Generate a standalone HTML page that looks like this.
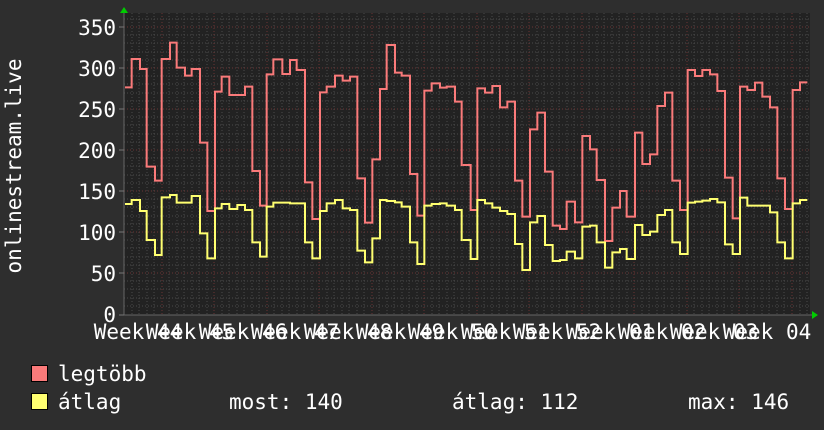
<!DOCTYPE html>
<html><head><meta charset="utf-8"><style>
html,body{margin:0;padding:0;background:#2e2e2e;}
svg{display:block}
text{font-family:"DejaVu Sans Mono","Liberation Mono",monospace;fill:#fff;font-size:21px}
</style></head><body>
<svg width="824" height="430" viewBox="0 0 824 430" xmlns="http://www.w3.org/2000/svg">
<rect width="824" height="430" fill="#2e2e2e"/>
<rect x="124" y="13" width="686" height="302" fill="#222"/>
<g id="grid" stroke-width="1" stroke-dasharray="1,2" fill="none">
<g stroke="#4a4a4a">
<script>/* none */</script>
</g>
</g>
<g stroke="#4a4a4a" stroke-width="1" stroke-dasharray="1,2">
<path d="M124 306h686M124 298h686M124 289h686M124 281h686M124 265h686M124 257h686M124 248h686M124 240h686M124 224h686M124 216h686M124 207h686M124 199h686M124 183h686M124 175h686M124 166h686M124 158h686M124 142h686M124 134h686M124 125h686M124 117h686M124 101h686M124 93h686M124 84h686M124 76h686M124 60h686M124 52h686M124 43h686M124 35h686M124 19h686"/>
<path d="M132 13v302M139 13v302M147 13v302M154 13v302M169 13v302M177 13v302M184 13v302M192 13v302M199 13v302M207 13v302M222 13v302M229 13v302M237 13v302M244 13v302M252 13v302M259 13v302M274 13v302M282 13v302M289 13v302M297 13v302M304 13v302M312 13v302M327 13v302M334 13v302M342 13v302M349 13v302M357 13v302M364 13v302M379 13v302M387 13v302M394 13v302M402 13v302M409 13v302M417 13v302M432 13v302M439 13v302M447 13v302M454 13v302M462 13v302M469 13v302M484 13v302M492 13v302M499 13v302M507 13v302M514 13v302M522 13v302M537 13v302M544 13v302M552 13v302M559 13v302M567 13v302M574 13v302M589 13v302M597 13v302M604 13v302M612 13v302M619 13v302M627 13v302M642 13v302M649 13v302M657 13v302M664 13v302M672 13v302M679 13v302M694 13v302M702 13v302M709 13v302M717 13v302M724 13v302M732 13v302M747 13v302M754 13v302M762 13v302M769 13v302M777 13v302M784 13v302M800 13v302M807 13v302"/>
</g>
<g stroke="#6a3434" stroke-width="1" stroke-dasharray="1,2">
<path d="M124 273h686M124 232h686M124 191h686M124 150h686M124 109h686M124 68h686M124 27h686"/>
<path d="M162 13v302M214 13v302M267 13v302M319 13v302M372 13v302M424 13v302M477 13v302M529 13v302M582 13v302M634 13v302M687 13v302M739 13v302M792 13v302"/>
</g>
<path d="M124 315h688M124 13v302" stroke="#666" stroke-width="1"/>
<path d="M119 315h5M119 273h5M119 232h5M119 191h5M119 150h5M119 109h5M119 68h5M119 27h5" stroke="#777"/>
<polygon points="120,13 128,13 124,7" fill="#0c0"/>
<polygon points="812,311 812,319 818,315" fill="#0c0"/>
<g fill="none" stroke-width="6" stroke-linejoin="miter">
<g transform="translate(120,30) scale(0.33333)">
<path stroke="#fa7a7a" d="M15,172H35V87H60V117H80V410H105V452H125V87H150V38H170V113H195V137H215V117H240V338H262V543H285V185H305V140H328V195H375V170H397V423H420V527H440V133H460V88H487V132H510V90H530V120H555V457H577V567H600V187H620V170H645V137H668V152H690V140H712V445H735V578H757V388H780V177H800V45H825V128H845V137H870V432H892V557H913V182H935V160H960V173H980V170H1005V215H1025V405H1028"/>
<path stroke="#ffff70" d="M15,522H35V510H60V543H80V630H105V675H125V502H150V495H170V518H215V498H240V610H262V685H285V535H305V522H328V537H352V525H375V540H397V637H420V680H440V530H460V518H510V520H555V637H577V685H600V543H620V520H645V510H668V535H690V540H712V662H735V697H757V625H780V510H800V513H825V517H845V530H870V637H892V702H913V527H935V522H960V520H980V527H1005V540H1025V630H1028"/>
</g>
<g transform="translate(460,30) scale(0.33333)">
<path stroke="#fa7a7a" d="M8,405H32V540H52V175H75V188H97V168H120V232H142V215H165V452H187V560H210V298H232V248H255V425H278V587H300V597H320V515H345V577H367V318H390V358H410V450H435V633H457V533H480V483H500V560H525V308H547V402H570V373H592V228H615V188H637V452H660V540H683V120H705V138H727V120H750V133H772V183H795V443H818V565H840V170H862V180H885V158H907V200H930V232H952V445H975V537H998V180H1020V157H1042"/>
<path stroke="#ffff70" d="M8,630H32V687H52V510H75V520H97V533H120V543H142V552H165V642H187V720H210V577H232V558H255V645H278V693H300V690H320V665H345V685H367V590H390V587H410V637H435V713H457V667H480V657H500V687H525V585H547V615H570V605H592V555H615V540H637V637H660V672H683V518H705V515H727V512H750V507H772V517H795V643H818V672H840V503H862V527H930V547H952V637H975V685H998V520H1020V510H1042"/>
</g>
</g>
<g text-anchor="end">
<text x="116" y="322">0</text>
<text x="116" y="281">50</text>
<text x="116" y="240">100</text>
<text x="116" y="199">150</text>
<text x="116" y="158">200</text>
<text x="116" y="117">250</text>
<text x="116" y="76">300</text>
<text x="116" y="35">350</text>
</g>
<g text-anchor="middle">
<text x="138" y="339">Week 44</text>
<text x="190" y="339">Week 45</text>
<text x="243" y="339">Week 46</text>
<text x="295" y="339">Week 47</text>
<text x="348" y="339">Week 48</text>
<text x="400" y="339">Week 49</text>
<text x="452" y="339">Week 50</text>
<text x="505" y="339">Week 51</text>
<text x="557" y="339">Week 52</text>
<text x="610" y="339">Week 01</text>
<text x="662" y="339">Week 02</text>
<text x="714" y="339">Week 03</text>
<text x="767" y="339">Week 04</text>
</g>
<text transform="translate(21,166) rotate(-90)" text-anchor="middle">onlinestream.live</text>
<rect x="31.5" y="365.5" width="16" height="16" fill="#fa7a7a" stroke="#000"/>
<rect x="31.5" y="393.5" width="16" height="16" fill="#ffff70" stroke="#000"/>
<text x="58" y="381">legtöbb</text>
<text x="58" y="409">átlag</text>
<text x="229" y="409">most: 140</text>
<text x="452" y="409">átlag: 112</text>
<text x="688" y="409">max: 146</text>
</svg>
</body></html>
